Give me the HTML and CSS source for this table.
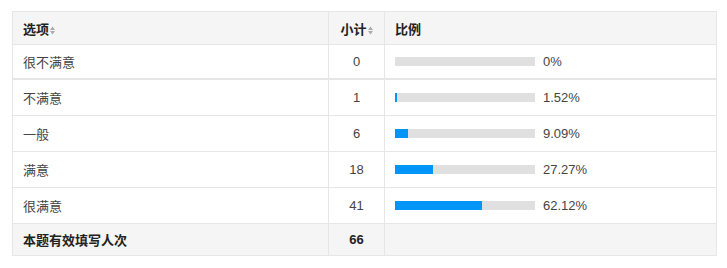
FILE: index.html
```html
<!DOCTYPE html>
<html lang="zh">
<head>
<meta charset="utf-8">
<link rel="stylesheet" href="styles.css">
</head>
<body>
<table class="stat">
  <colgroup>
    <col class="c-opt">
    <col class="c-num">
    <col class="c-pct">
  </colgroup>
  <thead>
    <tr>
      <th class="opt">选项<svg class="sort" width="5" height="9" viewBox="0 0 5 9"><path d="M0 4L2.5 0.5L5 4Z M0 5L2.5 8.5L5 5Z" fill="#aaa"/></svg></th>
      <th class="num">小计<svg class="sort" width="5" height="9" viewBox="0 0 5 9"><path d="M0 4L2.5 0.5L5 4Z M0 5L2.5 8.5L5 5Z" fill="#aaa"/></svg></th>
      <th class="pct">比例</th>
    </tr>
  </thead>
  <tbody>
    <tr class="first">
      <td class="opt">很不满意</td>
      <td class="num">0</td>
      <td class="pct"><div class="cell"><div class="bar"><div class="fill" style="width:0%"></div></div><span class="val">0%</span></div></td>
    </tr>
    <tr>
      <td class="opt">不满意</td>
      <td class="num">1</td>
      <td class="pct"><div class="cell"><div class="bar"><div class="fill" style="width:1.52%"></div></div><span class="val">1.52%</span></div></td>
    </tr>
    <tr>
      <td class="opt">一般</td>
      <td class="num">6</td>
      <td class="pct"><div class="cell"><div class="bar"><div class="fill" style="width:9.09%"></div></div><span class="val">9.09%</span></div></td>
    </tr>
    <tr>
      <td class="opt">满意</td>
      <td class="num">18</td>
      <td class="pct"><div class="cell"><div class="bar"><div class="fill" style="width:27.27%"></div></div><span class="val">27.27%</span></div></td>
    </tr>
    <tr>
      <td class="opt">很满意</td>
      <td class="num">41</td>
      <td class="pct"><div class="cell"><div class="bar"><div class="fill" style="width:62.12%"></div></div><span class="val">62.12%</span></div></td>
    </tr>
  </tbody>
  <tfoot>
    <tr>
      <td class="opt">本题有效填写人次</td>
      <td class="num">66</td>
      <td class="pct"></td>
    </tr>
  </tfoot>
</table>
</body>
</html>
```
FILE: styles.css
```css
html, body {
  margin: 0;
  padding: 0;
  background: #fff;
}
body {
  padding: 11px 0 0 12px;
  font-family: "Liberation Sans", "Noto Sans CJK SC", sans-serif;
  font-size: 13px;
  color: #444;
}
.stat {
  border-collapse: collapse;
  table-layout: fixed;
  width: 704px;
}
.c-opt { width: 316px; }
.c-num { width: 56px; }
.c-pct { width: 332px; }
.stat th, .stat td {
  border: 1px solid #e6e6e6;
  padding: 0 10px;
  text-align: left;
  vertical-align: middle;
}
.stat thead th {
  background: #f5f5f5;
  color: #222;
  font-weight: bold;
  height: 32px;
}
.stat tbody td {
  height: 35px;
}
.stat tbody tr.first td {
  border-bottom: 2px solid #e6e6e6;
  height: 33px;
}
.stat tfoot td {
  background: #f5f5f5;
  color: #222;
  font-weight: bold;
  height: 31px;
}
.stat .num {
  text-align: center;
  padding: 0;
}
.sort {
  margin-left: 1px;
  vertical-align: -1px;
}
.cell {
  display: flex;
  align-items: center;
}
.bar {
  width: 140px;
  height: 9px;
  background: #e0e0e0;
  flex: none;
}
.fill {
  height: 100%;
  background: #0095f6;
}
.val {
  margin-left: 8px;
}
```
